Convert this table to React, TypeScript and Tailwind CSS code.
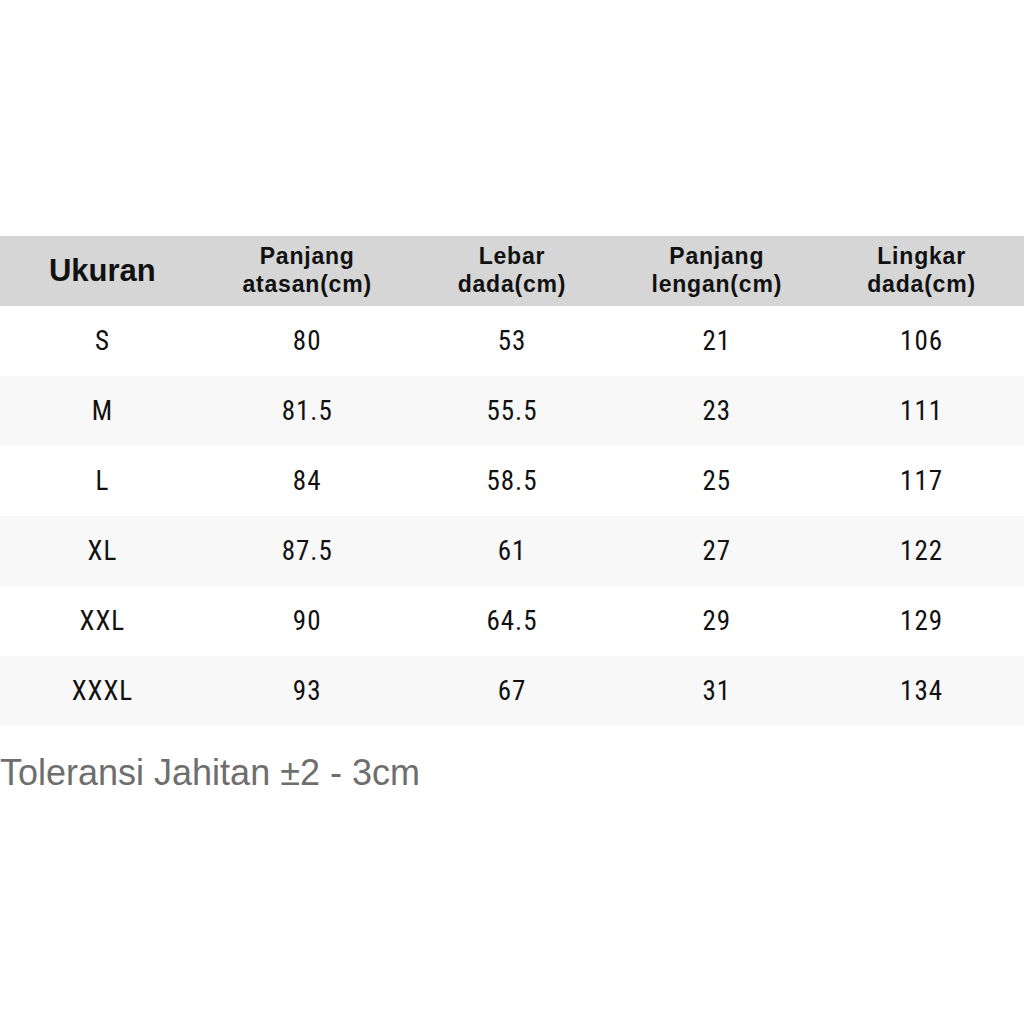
const headers = [
  ["Panjang", "atasan(cm)"],
  ["Lebar", "dada(cm)"],
  ["Panjang", "lengan(cm)"],
  ["Lingkar", "dada(cm)"],
];

const rows = [
  ["S", "80", "53", "21", "106"],
  ["M", "81.5", "55.5", "23", "111"],
  ["L", "84", "58.5", "25", "117"],
  ["XL", "87.5", "61", "27", "122"],
  ["XXL", "90", "64.5", "29", "129"],
  ["XXXL", "93", "67", "31", "134"],
];

const App = () => {
  return (
    <div className="w-[1024px] h-[1024px] bg-white pt-[236px]">
      {/* header */}
      <div className="grid grid-cols-5 h-[70px] bg-[#d6d6d6] font-['Liberation_Sans',Arial,sans-serif] font-bold text-[#111]">
        <div className="flex items-center justify-center text-[31px]">Ukuran</div>
        {headers.map((h, i) => (
          <div key={i} className="flex flex-col items-center justify-center text-[23px] leading-[28px] tracking-[0.8px] pb-[2px]">
            <span>{h[0]}</span>
            <span>{h[1]}</span>
          </div>
        ))}
      </div>

      {/* rows */}
      {rows.map((r, i) => (
        <div
          key={r[0]}
          className={`grid grid-cols-5 h-[70px] ${i % 2 === 1 ? "bg-[#f8f8f8]" : "bg-white"} font-['Liberation_Sans_Narrow','Roboto_Condensed',sans-serif] text-[27px] tracking-[1px] text-[#111]`}
        >
          {r.map((c, j) => (
            <div key={j} className="flex items-center justify-center">
              {c}
            </div>
          ))}
        </div>
      ))}

      <p className="mt-[29px] text-[36px] leading-none text-[#6e6e6e] font-['Liberation_Sans',Arial,sans-serif]">
        Toleransi Jahitan ±2 - 3cm
      </p>
    </div>
  );
};

export default App;
